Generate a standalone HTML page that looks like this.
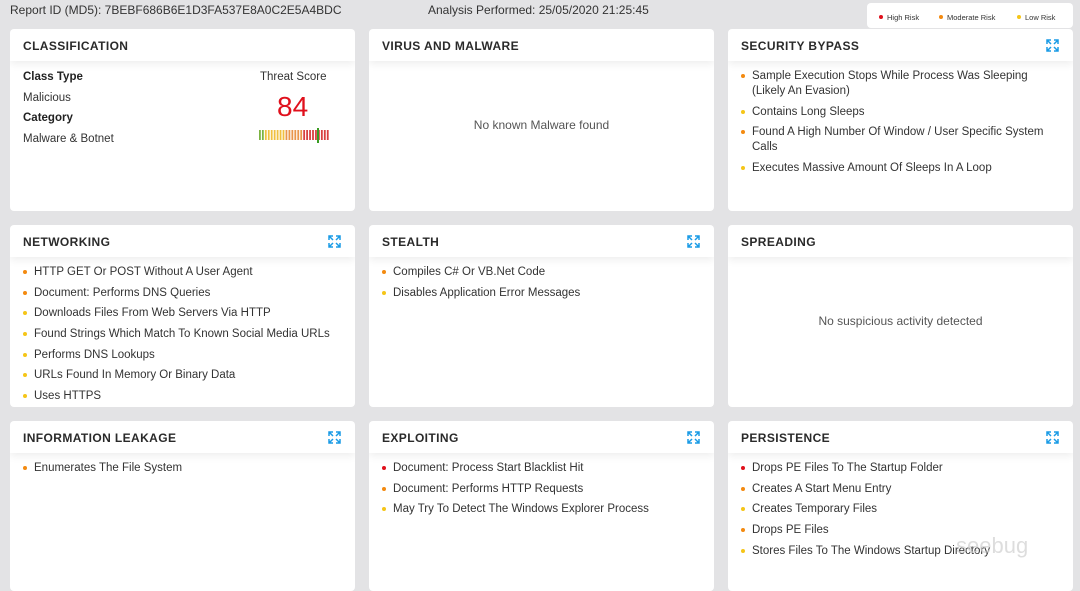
<!DOCTYPE html><html><head><style>
body{margin:0;width:1080px;height:582px;background:#e3e3e5;font-family:"Liberation Sans",sans-serif;position:relative;overflow:hidden;color:#333}
.top{position:absolute;top:3px;font-size:12px;color:#333}
.legend{position:absolute;left:867px;top:3px;width:206px;height:25px;background:#fff;border-radius:4px;font-size:7.5px;color:#333}
.legend span{position:absolute;top:10px}
.legend i{display:inline-block;width:4px;height:4px;border-radius:50%;margin-right:4px;vertical-align:1px}
.card{position:absolute;width:345px;background:#fff;border-radius:4px;overflow:hidden}
.hd{height:32px;box-shadow:0 3px 8px rgba(0,0,0,.07);position:relative}
.hd b{position:absolute;left:13px;top:10px;font-size:12px;letter-spacing:.4px;color:#2a2a2a}
.ex{position:absolute;right:14px;top:10px}
ul{list-style:none;margin:0;padding:8px 4px 0 13px;font-size:11.5px;line-height:15px;color:#333}
li{position:relative;padding-left:11px;margin-bottom:5.7px}
li:before{content:"";position:absolute;left:0;top:5px;width:4px;height:4px;border-radius:50%;background:var(--c)}
.r{--c:#e0101c}.o{--c:#f38a10}.y{--c:#f5c518}
.msg{position:absolute;width:100%;text-align:center;font-size:12px;color:#555}
</style></head><body>
<div class="top" style="left:10px">Report ID (MD5): 7BEBF686B6E1D3FA537E8A0C2E5A4BDC</div>
<div class="top" style="left:428px">Analysis Performed: 25/05/2020 21:25:45</div>
<div class="legend"><span style="left:12px"><i style="background:#e0101c"></i>High Risk</span><span style="left:72px"><i style="background:#f38a10"></i>Moderate Risk</span><span style="left:150px"><i style="background:#f5c518"></i>Low Risk</span></div>

<svg width="0" height="0" style="position:absolute"><defs><g id="ex" fill="none" stroke="#1a9be6" stroke-width="1.5"><path d="M1 5V1h4M1 1l4 4M12 5V1H8M12 1L8 5M1 8v4h4M1 12l4-4M12 8v4H8M12 12L8 8"/></g></defs></svg>

<div class="card" style="left:10px;top:29px;height:182px"><div class="hd"><b>CLASSIFICATION</b></div>
<div style="position:absolute;left:13px;top:38px;font-size:11.5px;line-height:20.6px"><b style="font-weight:bold;color:#222">Class Type</b><br>Malicious<br><b style="color:#222">Category</b><br>Malware &amp; Botnet</div>
<div style="position:absolute;left:250px;top:42px;font-size:11.5px">Threat Score</div>
<div style="position:absolute;left:267px;top:62px;font-size:28px;color:#e0101c">84</div>
<svg style="position:absolute;left:249px;top:99px" width="72" height="16" id="bars"></svg>
</div>
<div class="card" style="left:369px;top:29px;height:182px"><div class="hd"><b>VIRUS AND MALWARE</b></div><div class="msg" style="top:89px">No known Malware found</div></div>
<div class="card" style="left:728px;top:29px;height:182px"><div class="hd"><b>SECURITY BYPASS</b><svg class="ex" width="13" height="13"><use href="#ex"/></svg></div>
<ul style="padding-right:28px"><li class="o">Sample Execution Stops While Process Was Sleeping (Likely An Evasion)</li><li class="y">Contains Long Sleeps</li><li class="o">Found A High Number Of Window / User Specific System Calls</li><li class="y">Executes Massive Amount Of Sleeps In A Loop</li></ul></div>

<div class="card" style="left:10px;top:225px;height:182px"><div class="hd"><b>NETWORKING</b><svg class="ex" width="13" height="13"><use href="#ex"/></svg></div>
<ul style="white-space:nowrap"><li class="o">HTTP GET Or POST Without A User Agent</li><li class="o">Document: Performs DNS Queries</li><li class="y">Downloads Files From Web Servers Via HTTP</li><li class="y">Found Strings Which Match To Known Social Media URLs</li><li class="y">Performs DNS Lookups</li><li class="y">URLs Found In Memory Or Binary Data</li><li class="y">Uses HTTPS</li></ul></div>
<div class="card" style="left:369px;top:225px;height:182px"><div class="hd"><b>STEALTH</b><svg class="ex" width="13" height="13"><use href="#ex"/></svg></div>
<ul><li class="o">Compiles C# Or VB.Net Code</li><li class="y">Disables Application Error Messages</li></ul></div>
<div class="card" style="left:728px;top:225px;height:182px"><div class="hd"><b>SPREADING</b></div><div class="msg" style="top:89px">No suspicious activity detected</div></div>

<div class="card" style="left:10px;top:421px;height:170px"><div class="hd"><b>INFORMATION LEAKAGE</b><svg class="ex" width="13" height="13"><use href="#ex"/></svg></div>
<ul><li class="o">Enumerates The File System</li></ul></div>
<div class="card" style="left:369px;top:421px;height:170px"><div class="hd"><b>EXPLOITING</b><svg class="ex" width="13" height="13"><use href="#ex"/></svg></div>
<ul><li class="r">Document: Process Start Blacklist Hit</li><li class="o">Document: Performs HTTP Requests</li><li class="y">May Try To Detect The Windows Explorer Process</li></ul></div>
<div class="card" style="left:728px;top:421px;height:170px"><div class="hd"><b>PERSISTENCE</b><svg class="ex" width="13" height="13"><use href="#ex"/></svg></div>
<ul style="white-space:nowrap"><li class="r">Drops PE Files To The Startup Folder</li><li class="o">Creates A Start Menu Entry</li><li class="y">Creates Temporary Files</li><li class="o">Drops PE Files</li><li class="y">Stores Files To The Windows Startup Directory</li></ul>
<div style="position:absolute;left:228px;top:112px;font-size:22px;color:#d0d0d0;opacity:.7">seebug</div></div>
<script>
var s=document.getElementById('bars'),h='',n=24;
for(var i=0;i<n;i++){var t=i/(n-1);var c=t<.06?'#7cb342':t<.35?'#f0c040':t<.65?'#e9964a':'#d84040';h+='<rect x="'+(i*2.95)+'" y="2" width="1.8" height="10" fill="'+c+'"/>';}
h+='<rect x="58" y="0" width="2" height="15" fill="#3a9d23"/>';s.innerHTML=h;
</script>
</body></html>
